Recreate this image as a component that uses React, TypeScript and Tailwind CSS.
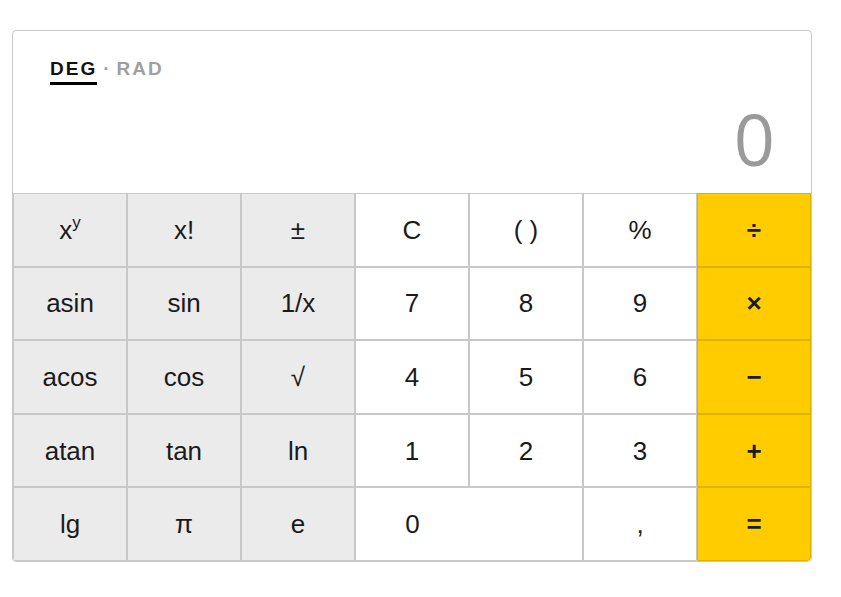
import React from "react";

type Key = { label: React.ReactNode; kind: "fn" | "num" | "op"; span?: number; left?: boolean };

const keys: Key[] = [
  { label: <span>x<sup className="text-[17px] -top-[11px]">y</sup></span>, kind: "fn" },
  { label: "x!", kind: "fn" },
  { label: "±", kind: "fn" },
  { label: "C", kind: "num" },
  { label: "( )", kind: "num" },
  { label: "%", kind: "num" },
  { label: "÷", kind: "op" },
  { label: "asin", kind: "fn" },
  { label: "sin", kind: "fn" },
  { label: "1/x", kind: "fn" },
  { label: "7", kind: "num" },
  { label: "8", kind: "num" },
  { label: "9", kind: "num" },
  { label: "×", kind: "op" },
  { label: "acos", kind: "fn" },
  { label: "cos", kind: "fn" },
  { label: "√", kind: "fn" },
  { label: "4", kind: "num" },
  { label: "5", kind: "num" },
  { label: "6", kind: "num" },
  { label: "−", kind: "op" },
  { label: "atan", kind: "fn" },
  { label: "tan", kind: "fn" },
  { label: "ln", kind: "fn" },
  { label: "1", kind: "num" },
  { label: "2", kind: "num" },
  { label: "3", kind: "num" },
  { label: "+", kind: "op" },
  { label: "lg", kind: "fn" },
  { label: "π", kind: "fn" },
  { label: "e", kind: "fn" },
  { label: "0", kind: "num", span: 2, left: true },
  { label: ",", kind: "num" },
  { label: "=", kind: "op" },
];

export default function App() {
  return (
    <div className="w-[841px] h-[597px] bg-white pt-[30px] pl-[12px]" style={{ fontFamily: '"Liberation Sans", Arial, sans-serif' }}>
      <div className="w-[800px] border border-[#c8c8c8] rounded-[4px] overflow-hidden bg-white">
        <div className="h-[162px] flex flex-col pl-[37px] pr-[36px] pt-[26px]">
          <div className="flex items-start text-[19px] font-bold tracking-[2px] leading-[24px]">
            <span className="text-[#111] border-b-[3px] border-black pb-[1px]">DEG</span>
            <span className="text-[#a0a0a0] ml-[6px]">·</span>
            <span className="text-[#a0a0a0] ml-[5px]">RAD</span>
          </div>
          <div className="flex-1 flex items-end justify-end pb-[17px]">
            <span className="text-[#9a9a9a] text-[72px] leading-[76px]" style={{ fontFamily: '"Open Sans", "Liberation Sans", sans-serif' }}>0</span>
          </div>
        </div>
        <div className="grid grid-cols-7 grid-rows-5 h-[368px]">
          {keys.map((k, i) => {
            const cls =
              k.kind === "fn"
                ? "bg-[#ebebeb] border-[#c8c8c8]"
                : k.kind === "num"
                ? "bg-white border-[#c8c8c8]"
                : "bg-[#ffcc00] border-[#dcb300] font-bold";
            return (
              <div
                key={i}
                className={`border flex items-center text-[26px] leading-[30px] text-[#1a1a1a] ${cls} ${k.span === 2 ? "col-span-2 justify-start" : "justify-center"} ${i === keys.length - 1 ? "rounded-br-[4px]" : ""}`}
              >
                {k.left ? <span className="w-1/2 text-center">{k.label}</span> : k.label}
              </div>
            );
          })}
        </div>
      </div>
    </div>
  );
}
